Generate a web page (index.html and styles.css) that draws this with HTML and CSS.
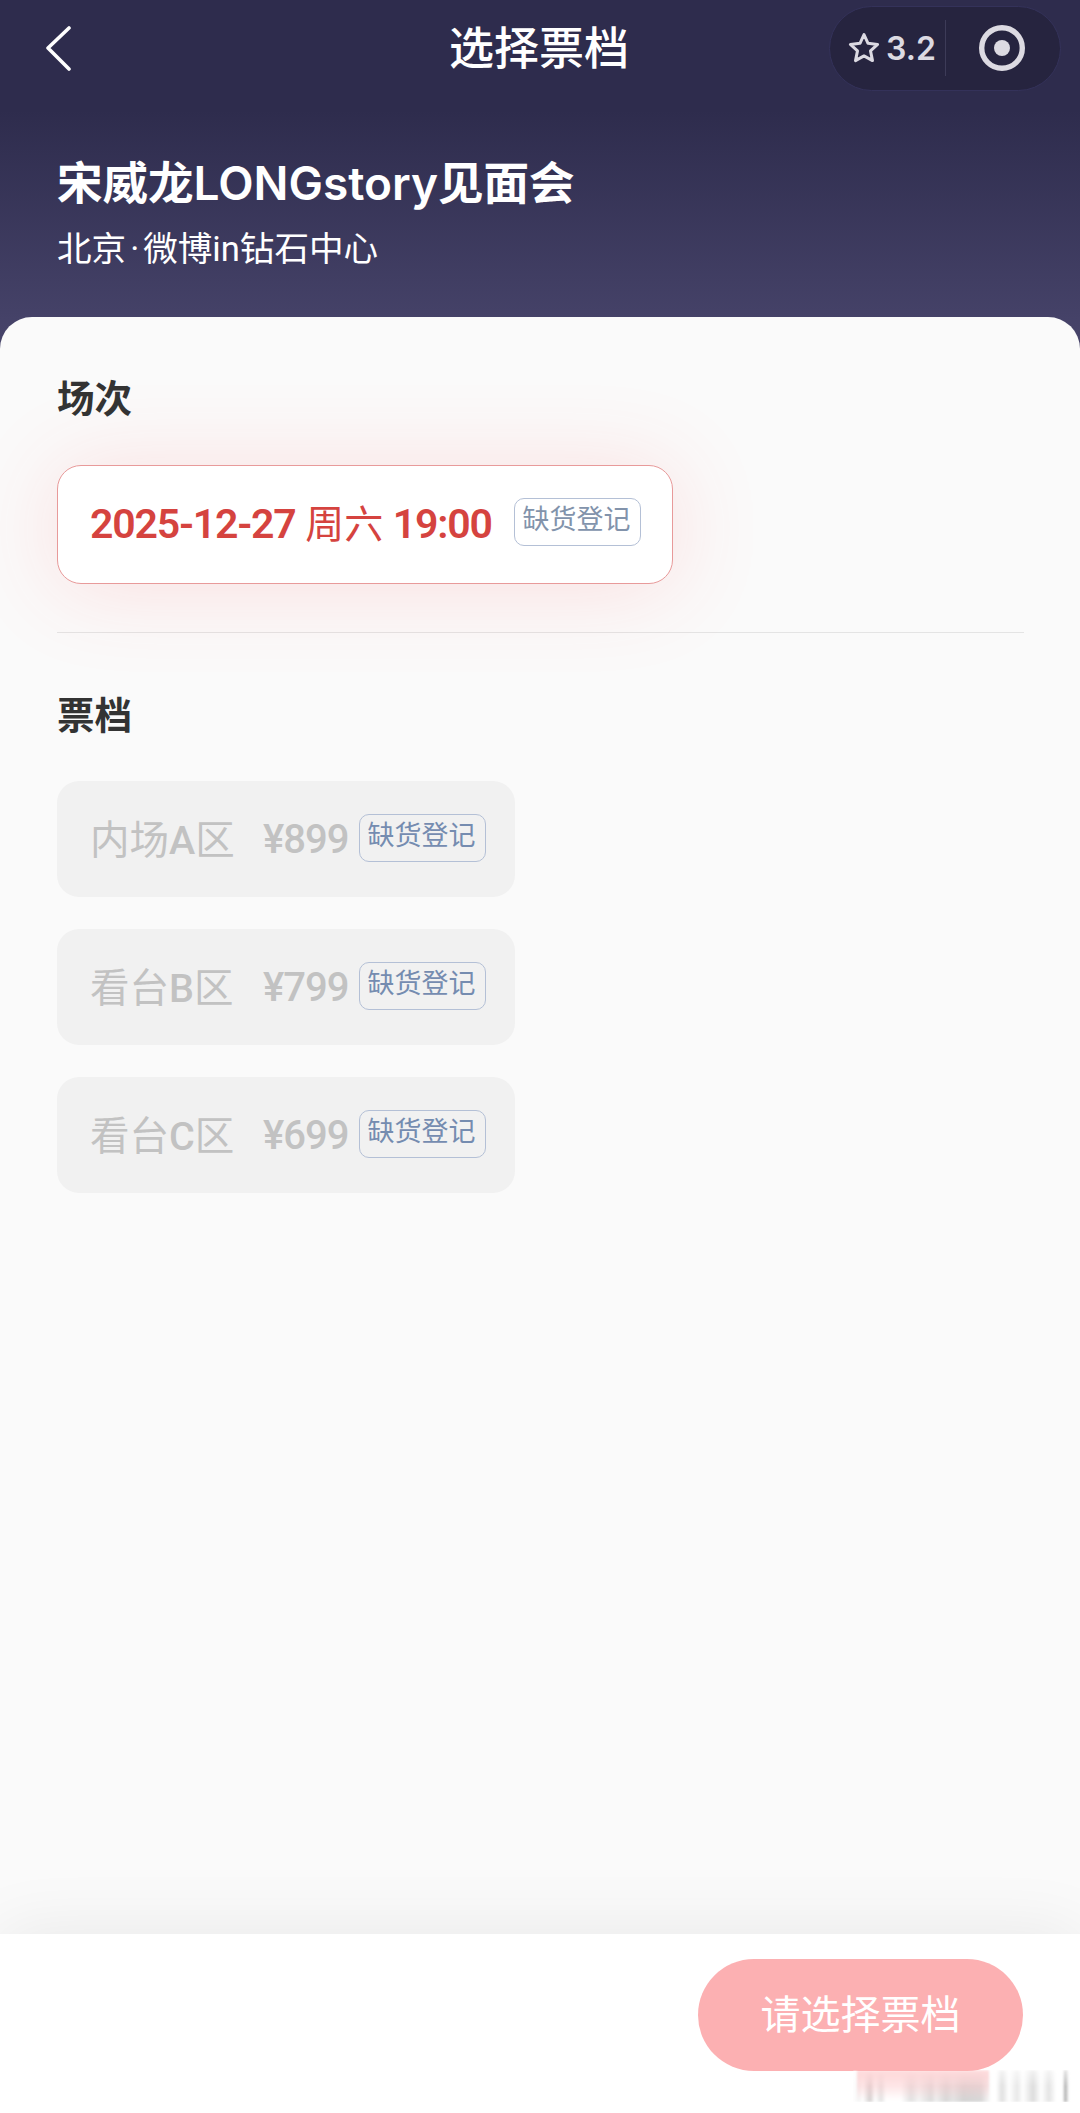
FILE: index.html
```html
<!DOCTYPE html>
<html lang="zh-CN">
<head>
    <meta charset="UTF-8">
    <meta name="viewport" content="width=device-width, initial-scale=1.0">
    <title>选择票档</title>
    <link rel="stylesheet" href="styles.css">
</head>
<body>
    <div id="wrap">
        <header id="header">
            <nav class="nav">
                <a href="#" class="back">
                    <svg width="28" height="48" viewBox="0 0 28 48"><path d="M26 4 L5 24 L26 45" fill="none" stroke="#fff" stroke-width="3.600" stroke-linecap="round" stroke-linejoin="round"/></svg>
                </a>
                <h1>选择票档</h1>
                <div class="capsule">
                    <div class="score">
                        <svg width="32" height="32" viewBox="0 0 32 32"><path d="M16 2.500 L20 11.300 L29.600 12.400 L22.500 18.900 L24.500 28.600 L16 23.900 L7.500 28.600 L9.500 18.900 L2.400 12.400 L12 11.300 Z" fill="none" stroke="#dcdae2" stroke-width="3" stroke-linejoin="round"/></svg>
                        <span>3.2</span>
                    </div>
                    <div class="close">
                        <svg width="48" height="48" viewBox="0 0 48 48"><circle cx="24" cy="24" r="20.300" fill="none" stroke="#dcdae2" stroke-width="5.400"/><circle cx="24" cy="24" r="8" fill="#dcdae2"/></svg>
                    </div>
                </div>
            </nav>
            <div class="show">
                <h2>宋威龙<span>LONGstory</span>见面会</h2>
                <p>北京<i>·</i>微博in钻石中心</p>
            </div>
        </header>
        <div class="contents">
            <section class="session">
                <h3>场次</h3>
                <div class="date on">
                    <span class="time"><b>2025-12-27</b> 周六 <b>19:00</b></span>
                    <span class="tag">缺货登记</span>
                </div>
            </section>
            <section class="ticket">
                <h3>票档</h3>
                <ul>
                    <li><span class="area">内场<b>A</b>区</span><span class="price">¥899</span><span class="tag">缺货登记</span></li>
                    <li><span class="area">看台<b>B</b>区</span><span class="price">¥799</span><span class="tag">缺货登记</span></li>
                    <li><span class="area">看台<b>C</b>区</span><span class="price">¥699</span><span class="tag">缺货登记</span></li>
                </ul>
            </section>
        </div>
        <footer id="footer">
            <a href="#" class="btn">请选择票档</a>
            <div class="smudge"></div>
        </footer>
    </div>
</body>
</html>
```
FILE: styles.css
```css
*{
    margin: 0;
    padding: 0;
    box-sizing: border-box;
}
ul,li{
    list-style: none;
}
a{
    text-decoration: none;
}
svg{
    display: block;
}
body{
    font-family: Roboto, "Noto Sans CJK SC", sans-serif;
    background-color: #fafafa;
}
#wrap{
    width: 1080px;
    height: 2113px;
    display: flex;
    flex-direction: column;
    overflow: hidden;
}

/* header */
#header{
    height: 349px;
    flex: none;
    background: linear-gradient(#2e2c4d 0, #2e2c4d 110px, #454268 320px, #474469 349px);
    color: #fff;
}
.nav{
    height: 96px;
    padding: 0 19px 0 43px;
    display: grid;
    grid-template-columns: 230px 1fr 230px;
    align-items: center;
}
.nav h1{
    font-size: 45px;
    font-weight: 500;
    line-height: 60px;
    text-align: center;
    padding: 4px 26px 0 0;
}
.capsule{
    height: 85px;
    display: flex;
    align-items: center;
    margin-left: -2px;
    border: 1px solid #34325a;
    border-radius: 43px;
    background-color: #26243f;
}
.score{
    width: 116px;
    height: 56px;
    padding-left: 18px;
    display: flex;
    align-items: center;
    gap: 6px;
    border-right: 1px solid #3d3b58;
    color: #dcdae2;
    font-family: Inter, sans-serif;
    font-size: 32px;
    font-weight: 600;
}
.close{
    padding-left: 32px;
}
.show{
    padding: 56px 58px 0 57px;
}
.show h2{
    font-size: 45.5px;
    font-weight: 700;
    line-height: 62px;
    white-space: nowrap;
}
.show h2 span{
    font-family: Inter, sans-serif;
    font-size: 46px;
    font-weight: 600;
}
.show p{
    font-size: 34.6px;
    font-weight: 400;
    line-height: 50px;
    margin-top: 8px;
}
.show i{
    font-style: normal;
    padding: 0 4px;
}

/* contents */
.contents{
    flex: 1;
    margin-top: -32px;
    padding: 54px 56px 0 57px;
    border-radius: 32px 32px 0 0;
    background-color: #fafafa;
}
h3{
    color: #333;
    font-size: 37.5px;
    font-weight: 700;
    line-height: 56px;
}
.session{
    height: 262px;
    border-bottom: 1px solid #e4e4e4;
}
.date{
    width: 616px;
    height: 119px;
    margin-top: 38px;
    padding: 0 31px 0 32px;
    display: flex;
    justify-content: space-between;
    align-items: center;
    border-radius: 24px;
    background-color: #fff;
}
.date.on{
    border: 1px solid #e89a9a;
    box-shadow: 0 4px 90px rgba(255, 70, 70, 0.15);
}
.time{
    padding-bottom: 8px;
    color: #d5433f;
    font-size: 39px;
    font-weight: 400;
    white-space: nowrap;
}
.time b{
    font-size: 41px;
    font-weight: 600;
    letter-spacing: -1.2px;
}
.tag{
    width: 127px;
    height: 48px;
    display: block;
    border: 1px solid #b4c0d6;
    border-radius: 10px;
    color: #758cb0;
    font-size: 27px;
    font-weight: 400;
    line-height: 43px;
    text-align: center;
    text-indent: -2px;
    white-space: nowrap;
}
.date .tag{
    margin-bottom: 6px;
    color: #8293ab;
}
.ticket{
    padding-top: 55px;
}
.ticket ul{
    padding-top: 37px;
    display: flex;
    flex-direction: column;
    gap: 32px;
}
.ticket li{
    width: 458px;
    height: 116px;
    padding: 0 29px 0 33px;
    display: flex;
    align-items: center;
    border-radius: 22px;
    background-color: #f1f1f1;
    color: #c2c2c2;
}
.area{
    width: 173px;
    padding-bottom: 6px;
    font-size: 39.5px;
    font-weight: 400;
}
.area b{
    font-weight: 500;
}
.price{
    flex: 1;
    font-size: 40px;
    font-weight: 500;
    letter-spacing: -1px;
}
.ticket .tag{
    margin-bottom: 2px;
}

/* footer */
#footer{
    position: relative;
    height: 179px;
    flex: none;
    padding: 25px 57px 0 0;
    display: flex;
    justify-content: flex-end;
    align-items: flex-start;
    background-color: #fff;
    box-shadow: 0 0 70px rgba(0, 0, 0, 0.08);
}
.btn{
    width: 325px;
    height: 112px;
    border-radius: 56px;
    background-color: #fcb0b2;
    color: #fff;
    font-size: 40px;
    font-weight: 400;
    line-height: 114px;
    text-align: center;
}
.smudge{
    position: absolute;
    right: 8px;
    bottom: 11px;
    width: 219px;
    height: 32px;
    background:
        linear-gradient(rgba(252,176,178,1), rgba(253,200,202,0.6) 40%, rgba(255,255,255,0)) 4px 0 / 132px 30px no-repeat,
        linear-gradient(90deg, #fff 0, #f4f4f4 6px, #fff 10px, #d4d0d0 17px, #fff 22px, #e4e4e4 28px, #fff 33px, #fff 48px, #e2e2e2 58px, #f4f4f4 66px, #dcdcdc 78px, #eee 83px, #d8d8d8 93px, #e4e4e4 100px, #d4d4d4 110px, #d8d8d8 128px, #fff 138px, #fff 143px, #e0e0e0 149px, #fff 156px, #e8e8e8 164px, #fff 170px, #dcdcdc 180px, #fff 188px, #e4e4e4 196px, #fff 203px, #fff 210px, #aaa 212px, #fff 216px);
    -webkit-mask-image: linear-gradient(rgba(0,0,0,0.4), #000 50%);
    mask-image: linear-gradient(rgba(0,0,0,0.4), #000 50%);
    filter: blur(1px);
}
```
